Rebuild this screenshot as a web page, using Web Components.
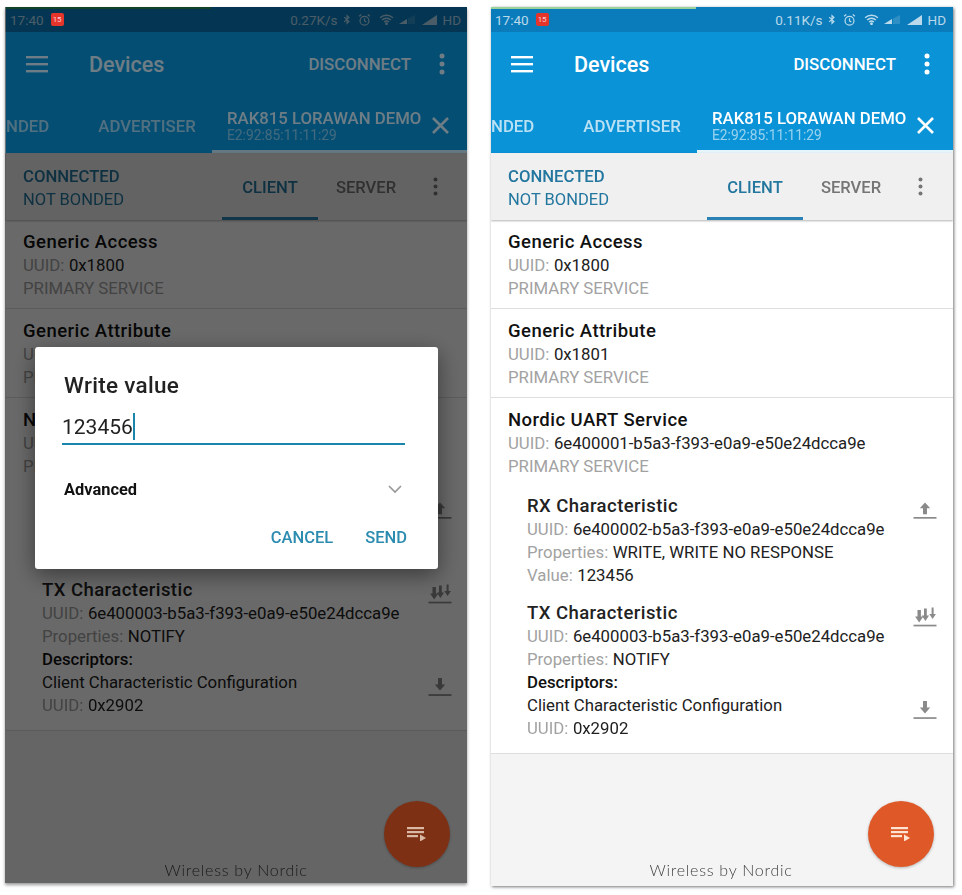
<!DOCTYPE html>
<html><head><meta charset="utf-8">
<style>
html,body{margin:0;padding:0;background:#fff}
body{width:962px;height:895px;overflow:hidden;font-family:Roboto,"Liberation Sans",sans-serif}
#stage{display:flex;gap:24px;padding:7px 0 0 5px;align-items:flex-start}
</style></head><body>
<div id="stage">
<phone-screen dim style="height:876px" speed="0.27K/s" date="15">
  <svc-item name="Generic Access" uuid="0x1800"></svc-item>
  <svc-item name="Generic Attribute" uuid="0x1801"></svc-item>
  <svc-item name="Nordic UART Service" uuid="6e400001-b5a3-f393-e0a9-e50e24dcca9e" open>
    <char-item name="RX Characteristic" icon="up" uuid="6e400002-b5a3-f393-e0a9-e50e24dcca9e" props="WRITE, WRITE NO RESPONSE"></char-item>
    <char-item name="TX Characteristic" icon="multi" uuid="6e400003-b5a3-f393-e0a9-e50e24dcca9e" props="NOTIFY" desc></char-item>
  </svc-item>
  <write-dialog slot="over"></write-dialog>
</phone-screen>
<phone-screen style="height:879px" speed="0.11K/s" date="15">
  <svc-item name="Generic Access" uuid="0x1800"></svc-item>
  <svc-item name="Generic Attribute" uuid="0x1801"></svc-item>
  <svc-item name="Nordic UART Service" uuid="6e400001-b5a3-f393-e0a9-e50e24dcca9e" open>
    <char-item name="RX Characteristic" icon="up" uuid="6e400002-b5a3-f393-e0a9-e50e24dcca9e" props="WRITE, WRITE NO RESPONSE" value="123456"></char-item>
    <char-item name="TX Characteristic" icon="multi" uuid="6e400003-b5a3-f393-e0a9-e50e24dcca9e" props="NOTIFY" desc></char-item>
  </svc-item>
</phone-screen>
</div>
<script>
const ICONS={
 up:'<path d="M12 4.500l-5.200 5.800h3.200v6h4v-6h3.200z"/><rect x="0.500" y="19" width="23" height="1.700"/>',
 down:'<path d="M10 4h4v6.500h3.200L12 16.500l-5.200-6H10z"/><rect x="0.500" y="20.200" width="23" height="1.700"/>',
 multi:'<path d="M4.500 5h3.400v6.500h2.400l-4.100 6-4.100-6h2.400z"/><path d="M11 3.500h2.800v7h2.300l-3.700 5.500-3.700-5.500H11z"/><path d="M18.600 2.500h2v6.500h2.300l-3.300 5-3.300-5h2.300z"/><rect x="0.500" y="19.700" width="23" height="1.700"/>'
};
function def(name,html){
  customElements.define(name,class extends HTMLElement{
    connectedCallback(){
      if(this.shadowRoot)return;
      const r=this.attachShadow({mode:'open'});
      r.innerHTML=typeof html==='function'?html(this):html;
    }
  });
}
def('status-bar',el=>`<style>
:host{display:flex;align-items:center;height:25px;padding:0 7px 0 4px;box-sizing:border-box;color:rgba(255,255,255,.72);font-size:13.500px;
 background:linear-gradient(var(--green),var(--green)) 0 0/205px 2px no-repeat,#0a7cbb}
.cal{position:relative;z-index:2;width:13px;height:13px;margin-left:7px;border-radius:2px;background:#e5352b;color:#fcd;font-size:8px;line-height:13px;text-align:center}
.sp{flex:1}
svg{display:block;fill:currentColor}
.row{display:flex;align-items:center}
</style><span>17:40</span><span class="cal">${el.getAttribute('date')}</span><span class="sp"></span>
<div class="row"><span>${el.getAttribute('speed')}</span>
<svg width="8" height="13" viewBox="0 0 10 13" style="fill:none;stroke:currentColor;stroke-width:1.400;margin-left:5px"><path d="M1.500 3.500l6 5.500-2.500 2.500V1.500L7.500 4l-6 5.500"/></svg>
<svg width="13" height="14" viewBox="0 0 14 14" style="fill:none;stroke:currentColor;stroke-width:1.300;margin-left:7px"><circle cx="7" cy="7.800" r="4.800"/><path d="M7 5v3l2 1M1.200 3L3.500 1M12.800 3L10.500 1"/></svg>
<svg width="15" height="11" viewBox="0 0 16 12" style="fill:none;stroke:currentColor;stroke-width:1.500;margin-left:8px"><path d="M1 4.200a10 10 0 0 1 14 0M3.200 6.500a7 7 0 0 1 9.600 0M5.400 8.700a4 4 0 0 1 5.200 0"/><circle cx="8" cy="10.600" r=".8"/></svg>
<svg width="16" height="9" viewBox="0 0 16 9" style="margin-left:5px"><path d="M0 9L8 4v5z"/><path opacity=".2" d="M9 3.500L16 0v9H9z"/></svg>
<svg width="15" height="10" viewBox="0 0 15 10" style="margin-left:7px"><path d="M0 10L15 0v10z"/></svg>
<span style="margin-left:6px">HD</span></div>`);
def('app-toolbar',`<style>
:host{display:flex;align-items:center;height:60px;padding:4px 23px 0 20px;box-sizing:border-box;background:#0b93d7;color:#fff}
svg{display:block;fill:currentColor}
.t{font-size:21.500px;font-weight:500;margin-left:41px;flex:1}
.d{font-size:16.800px;font-weight:500}
.m{margin-left:28px}
</style>
<svg width="22" height="17" viewBox="0 0 22 17"><rect width="22" height="2.400" y="0"/><rect width="22" height="2.400" y="7"/><rect width="22" height="2.400" y="14"/></svg>
<span class="t">Devices</span><span class="d">DISCONNECT</span>
<svg class="m" width="6" height="22" viewBox="0 0 6 22"><circle cx="3" cy="3" r="2.500"/><circle cx="3" cy="11" r="2.500"/><circle cx="3" cy="19" r="2.500"/></svg>`);
def('tab-strip',`<style>
:host{display:flex;height:61px;box-sizing:border-box;background:#0b93d7;color:#fff;overflow:hidden;position:relative}
.t{font-size:16.800px;font-weight:500;color:rgba(255,255,255,.72);align-self:center;margin-top:7px;white-space:nowrap}
.a{margin-left:auto;width:256px;box-sizing:border-box;border-bottom:3px solid #e6f4fb;padding:17px 0 0 15px;display:flex;align-items:flex-start}
.n{font-size:16.750px;font-weight:500;line-height:19px;white-space:nowrap}
.m{font-size:13.800px;line-height:15px;color:rgba(255,255,255,.58)}
svg{display:block;fill:none;stroke:currentColor;stroke-width:2.600;margin:8px 0 0 11px;flex:none}
</style>
<span class="t" style="margin-left:0">NDED</span><span class="t" style="margin-left:49px">ADVERTISER</span>
<div class="a"><div><div class="n">RAK815 LORAWAN DEMO</div><div class="m">E2:92:85:11:11:29</div></div>
<svg width="17" height="17" viewBox="0 0 17 17"><path d="M1 1l15 15M16 1L1 16"/></svg></div>`);
def('conn-bar',`<style>
:host{display:flex;height:67px;box-sizing:border-box;background:#f0f0f1;box-shadow:0 1px 2px rgba(0,0,0,.3);position:relative;padding-left:17px;z-index:1}
.s{align-self:flex-start;padding-top:12px;font-size:16.500px;line-height:23px;color:#23779f}
.s b{font-weight:500;display:block;font-size:16.700px}
.tab{font-size:16.600px;font-weight:500;display:flex;align-items:center;justify-content:center;box-sizing:border-box;padding-top:5px}
.c{width:96px;color:#23779f;border-bottom:3px solid #2a82b4;margin-left:auto}
.v{color:#757575;width:60px;margin-left:18px;padding-bottom:3px}
svg{display:block;fill:#757575;align-self:center;margin:0 30px 0 37px;flex:none}
</style><div class="s"><b>CONNECTED</b>NOT BONDED</div>
<div class="tab c">CLIENT</div><div class="tab v">SERVER</div>
<svg width="5" height="19" viewBox="0 0 5 19"><circle cx="2.500" cy="2.500" r="2"/><circle cx="2.500" cy="9.500" r="2"/><circle cx="2.500" cy="16.500" r="2"/></svg>`);
const lineCss=`.l{height:23px;line-height:23px;font-size:16.780px;color:#212121;display:flex;white-space:nowrap}
.g{color:#a2a2a2;margin-right:4.500px}
.h,.h2{font-size:18.500px;font-weight:500;letter-spacing:.45px;color:#111}
.h2{color:#222}
.sp{flex:1}
svg{display:block;width:24px;height:24px;fill:#8a8a8a;margin-top:3px;flex:none;overflow:visible}`;
def('svc-item',el=>`<style>:host{display:block;padding:11px 0 8px;border-bottom:1px solid #dedede;background:#fff}
:host([open]){border-bottom:1px solid #dedede;padding-bottom:13px}
.w{padding:0 17px}
::slotted(char-item){display:block}
.k{padding:17px 16px 0 36px;display:flex;flex-direction:column;gap:15px}
${lineCss}</style>
<div class="w"><div class="l h">${el.getAttribute('name')}</div>
<div class="l"><span class="g">UUID:</span>${el.getAttribute('uuid')}</div>
<div class="l g">PRIMARY SERVICE</div></div>
${el.hasAttribute('open')?'<div class="k"><slot></slot></div>':''}`);
def('char-item',el=>{const ic=el.getAttribute('icon');return `<style>:host{display:block}${lineCss}</style>
<div class="l h2">${el.getAttribute('name')}<span class="sp"></span><svg viewBox="0 0 24 24">${ICONS[ic]}</svg></div>
<div class="l"><span class="g">UUID:</span>${el.getAttribute('uuid')}</div>
<div class="l"><span class="g">Properties:</span>${el.getAttribute('props')}</div>
${el.hasAttribute('value')?`<div class="l"><span class="g">Value:</span>${el.getAttribute('value')}</div>`:''}
${el.hasAttribute('desc')?`<div class="l" style="font-weight:500;color:#111">Descriptors:</div>
<div class="l">Client Characteristic Configuration<span class="sp"></span><svg viewBox="0 0 24 24">${ICONS.down}</svg></div>
<div class="l"><span class="g">UUID:</span>0x2902</div>`:''}`});
def('write-dialog',`<style>
:host{position:absolute;left:30px;top:340px;width:403px;height:222px;background:#fff;border-radius:3px;box-shadow:0 6px 22px rgba(0,0,0,.45);box-sizing:border-box;padding:24px 33px 0 29px;display:flex;flex-direction:column;color:#222}
.t{font-size:22.500px;font-weight:500;line-height:28px;letter-spacing:.3px}
.i{margin:13px 0 0 -2px;font-size:21px;line-height:31px;height:31px;border-bottom:2px solid #1a86ae;color:#222}
.i i{display:inline-block;width:2px;height:27px;background:#1a86ae;vertical-align:-6px}
.a{margin-top:35px;display:flex;align-items:center;justify-content:space-between;font-size:16.400px;font-weight:700;color:#111}
svg{fill:none;stroke:#999;stroke-width:1.700;display:block;margin-right:3px}
.b{margin-top:29px;display:flex;justify-content:flex-end;gap:32px;margin-right:-2px;font-size:16.500px;font-weight:500;color:#2b8cb0}
</style>
<div class="t">Write value</div>
<div class="i">123456<i></i></div>
<div class="a"><span>Advanced</span><svg width="14" height="9" viewBox="0 0 14 9"><path d="M1 1l6 6 6-6"/></svg></div>
<div class="b"><span>CANCEL</span><span>SEND</span></div>`);
def('fab-button',`<style>
:host{position:absolute;right:var(--fab-r,19px);bottom:var(--fab-b,19px);width:66px;height:66px;border-radius:50%;background:var(--fab,#de5828);box-shadow:0 1px 3px rgba(0,0,0,.25);display:flex;align-items:center;justify-content:center;color:var(--fab-ink,#ffe3d3)}
svg{display:block;fill:currentColor}
</style><svg width="20" height="14" viewBox="0 0 20 14"><rect width="17" height="2.200"/><rect y="4" width="17" height="2.200"/><rect y="8" width="11" height="2.200"/><path d="M13 7.500l6 3.500-6 3.500z"/></svg>`);
def('phone-screen',el=>{const dim=el.hasAttribute('dim');return `<style>
:host{display:block;width:462px;position:relative;overflow:hidden;background:#f4f4f4;box-shadow:${dim?'0 2px 3px rgba(0,0,0,.4)':'1px 1px 3px rgba(0,0,0,.55)'};filter:blur(.3px);
 --green:${dim?'#2f9a50':'#9ad09a'};--fab:#7d3014;--fab-ink:#d9b9a6;--fab-r:17px;--fab-b:16px}
:host(:not([dim])){--fab:#de5828;--fab-ink:#ffe3d3;--fab-r:19px;--fab-b:19px}
.c{display:flex;flex-direction:column;height:100%;width:462px;${dim?'margin-left:1px;':''}}
.list{flex:1;min-height:0}
.foot{font:300 16px Lato,"Open Sans",sans-serif;letter-spacing:.75px;color:#444;text-align:center;padding-bottom:${dim?'4px':'7px'};line-height:18px;margin-left:-2px}
.scrim{position:absolute;inset:0;z-index:1;background:linear-gradient(rgba(0,8,14,.6) 25px,rgba(0,26,40,.57) 25px,rgba(0,26,40,.57) 146px,rgba(0,0,0,.59) 146px)}
fab-button{z-index:2}
::slotted(write-dialog){z-index:3}
</style>
<div class="c"><status-bar speed="${el.getAttribute('speed')}" date="${el.getAttribute('date')}"></status-bar>
<app-toolbar></app-toolbar><tab-strip></tab-strip><conn-bar></conn-bar>
<div class="list"><slot></slot></div>
<div class="foot">Wireless by Nordic</div></div>
${dim?'<div class="scrim"></div>':''}
<fab-button></fab-button>
<slot name="over"></slot>`});
</script>
</body></html>
